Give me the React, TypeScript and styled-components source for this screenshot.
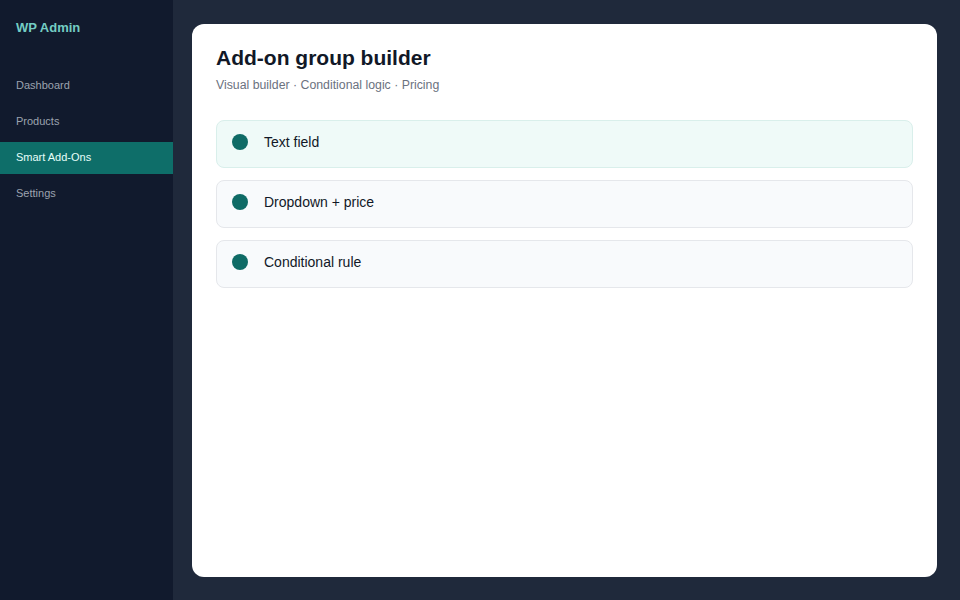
import React from "react";
import styled, { createGlobalStyle } from "styled-components";

const GlobalStyle = createGlobalStyle`
  html, body {
    margin: 0;
    padding: 0;
    height: 100%;
  }
  body {
    font-family: "Liberation Sans", Arial, sans-serif;
    background: #1e293b;
  }
  #root {
    height: 100%;
  }
`;

const Shell = styled.div`
  display: flex;
  width: 960px;
  height: 600px;
  background: #1f293b;
`;

const Sidebar = styled.aside`
  width: 173px;
  flex-shrink: 0;
  background: #111a2d;
  display: flex;
  flex-direction: column;
`;

const Brand = styled.div`
  font-size: 13px;
  font-weight: 700;
  color: #74cdc3;
  padding: 20px 16px 0;
  height: 48px;
  box-sizing: border-box;
`;

const Nav = styled.nav`
  display: flex;
  flex-direction: column;
  margin-top: 22px;
`;

const NavItem = styled.div<{ $active?: boolean }>`
  height: 32px;
  box-sizing: border-box;
  margin-bottom: 4px;
  display: flex;
  align-items: center;
  padding: 0 16px 3px;
  font-size: 11px;
  color: ${(p) => (p.$active ? "#e6fffa" : "#9ca3af")};
  background: ${(p) => (p.$active ? "#0e6e69" : "transparent")};
`;

const Main = styled.main`
  flex: 1;
  padding: 24px 23px 23px 19px;
  display: flex;
`;

const Card = styled.section`
  flex: 1;
  background: #ffffff;
  border-radius: 12px;
  padding: 22px 24px;
  display: flex;
  flex-direction: column;
`;

const Title = styled.h1`
  margin: 0;
  font-size: 21px;
  font-weight: 700;
  color: #111827;
  line-height: 24px;
`;

const Subtitle = styled.p`
  margin: 7px 0 0;
  font-size: 12.3px;
  color: #6b7280;
  line-height: 16px;
`;

const List = styled.div`
  display: flex;
  flex-direction: column;
  gap: 12px;
  margin-top: 27px;
`;

const Row = styled.div<{ $highlight?: boolean }>`
  height: 48px;
  box-sizing: border-box;
  display: flex;
  align-items: center;
  gap: 16px;
  padding: 0 15px 4px;
  border: 1px solid ${(p) => (p.$highlight ? "#d9efeb" : "#e5e7eb")};
  border-radius: 8px;
  background: ${(p) => (p.$highlight ? "#effaf8" : "#f8fafc")};
`;

const Dot = styled.span`
  width: 16px;
  height: 16px;
  border-radius: 50%;
  background: #0f6b66;
  flex-shrink: 0;
`;

const RowLabel = styled.span`
  font-size: 14px;
  color: #111827;
`;

const navItems = ["Dashboard", "Products", "Smart Add-Ons", "Settings"];
const fields = ["Text field", "Dropdown + price", "Conditional rule"];

export default function App() {
  return (
    <>
      <GlobalStyle />
      <Shell>
        <Sidebar>
          <Brand>WP Admin</Brand>
          <Nav>
            {navItems.map((item) => (
              <NavItem key={item} $active={item === "Smart Add-Ons"}>
                {item}
              </NavItem>
            ))}
          </Nav>
        </Sidebar>
        <Main>
          <Card>
            <Title>Add-on group builder</Title>
            <Subtitle>Visual builder · Conditional logic · Pricing</Subtitle>
            <List>
              {fields.map((f, i) => (
                <Row key={f} $highlight={i === 0}>
                  <Dot />
                  <RowLabel>{f}</RowLabel>
                </Row>
              ))}
            </List>
          </Card>
        </Main>
      </Shell>
    </>
  );
}
